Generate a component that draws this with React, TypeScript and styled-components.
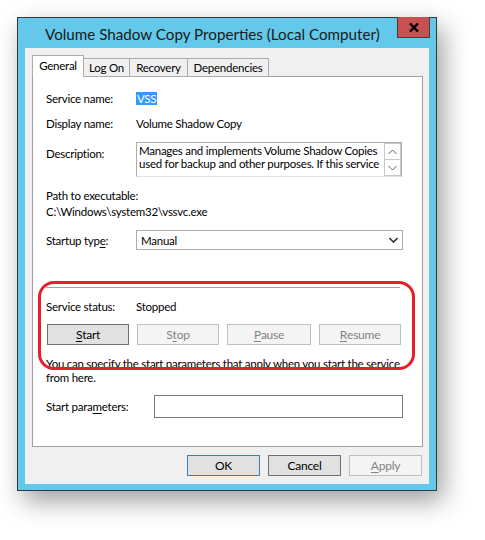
import React from 'react';
import styled, { createGlobalStyle } from 'styled-components';

const GlobalStyle = createGlobalStyle`
  html, body {
    margin: 0;
    padding: 0;
    background: #ffffff;
  }
  body {
    font-family: Lato, "Liberation Sans", Arial, sans-serif;
    font-size: 11.5px;
    letter-spacing: -0.25px;
    color: #000;
  }
`;

const Page = styled.div`
  width: 485px;
  height: 540px;
  padding: 17px 0 0 17px;
  box-sizing: border-box;
  overflow: hidden;
`;

const Window = styled.div`
  width: 420px;
  box-sizing: border-box;
  background: #63c8e9;
  border: 1px solid #2d3a40;
  box-shadow: 6px 10px 24px rgba(0, 0, 0, 0.38);
  display: flex;
  flex-direction: column;
  padding: 0 7px 6px 7px;
`;

const TitleBar = styled.div`
  height: 30px;
  display: flex;
  align-items: center;
  padding-left: 20px;
  position: relative;
`;

const Title = styled.div`
  font-size: 15.2px;
  letter-spacing: 0;
  color: #1a1a1a;
  margin-top: 2px;
  white-space: nowrap;
`;

const CloseButton = styled.div`
  position: absolute;
  right: -1px;
  top: -1px;
  width: 33px;
  height: 21px;
  background: #c75050;
  border: 1px solid #4a3a3a;
  border-top: none;
  box-sizing: border-box;
  display: flex;
  align-items: center;
  justify-content: center;
  svg { display: block; }
`;

const Client = styled.div`
  background: #f0f0f0;
  padding: 7px 6px 8px 7px;
  display: flex;
  flex-direction: column;
`;

const TabStrip = styled.div`
  display: flex;
  align-items: flex-end;
  height: 22px;
  position: relative;
  z-index: 1;
`;

const Tab = styled.div<{ $active?: boolean; $w: number }>`
  width: ${p => p.$w}px;
  height: ${p => (p.$active ? 22 : 19)}px;
  box-sizing: border-box;
  background: ${p => (p.$active ? '#ffffff' : '#f0f0f0')};
  border: 1px solid #acacac;
  border-bottom: ${p => (p.$active ? 'none' : '1px solid #acacac')};
  margin-left: ${p => (p.$active ? 0 : -1)}px;
  display: flex;
  align-items: center;
  justify-content: center;
  white-space: nowrap;
  padding-bottom: ${p => (p.$active ? 3 : 0)}px;
  &:first-child { margin-left: 0; }
`;

const Pane = styled.div`
  background: #ffffff;
  border: 1px solid #a0a0a0;
  margin-top: -1px;
  height: 371px;
  box-sizing: border-box;
  padding: 14px 20px 0 13px;
  display: flex;
  flex-direction: column;
  position: relative;
`;

const Row = styled.div<{ $gap?: number; $top?: boolean }>`
  display: grid;
  grid-template-columns: 90px 1fr;
  align-items: ${p => (p.$top ? 'start' : 'center')};
  margin-top: ${p => p.$gap ?? 0}px;
  line-height: 15px;
`;

const Label = styled.div<{ $pad?: number }>`
  padding-top: ${p => p.$pad ?? 0}px;
  white-space: nowrap;
`;

const Selected = styled.span`
  background: #3399ff;
  color: #ffffff;
  padding: 0 1px;
`;

const TextArea = styled.div`
  height: 35px;
  border: 1px solid #abadb3;
  border-bottom-color: #e3e3e3;
  box-sizing: border-box;
  display: flex;
  overflow: hidden;
`;

const TextContent = styled.div`
  flex: 1;
  padding: 1px 0 0 2px;
  line-height: 13px;
  white-space: nowrap;
`;

const ScrollBar = styled.div`
  width: 17px;
  display: flex;
  flex-direction: column;
`;

const ScrollBtn = styled.div`
  height: 17px;
  border: 1px solid #c8c8c8;
  margin-top: -1px;
  box-sizing: border-box;
  background: #fff;
  display: flex;
  align-items: center;
  justify-content: center;
  &:first-child { margin-top: 0; }
`;

const Plain = styled.div<{ $gap?: number }>`
  margin-top: ${p => p.$gap ?? 0}px;
  line-height: 15px;
`;

const Combo = styled.div`
  height: 20px;
  border: 1px solid #acacac;
  box-sizing: border-box;
  background: #fff;
  display: flex;
  align-items: center;
  justify-content: space-between;
  padding: 0 4px 0 4px;
  margin-right: -1px;
`;

const Separator = styled.div`
  height: 1px;
  background: #a0a0a0;
  margin: 37px 2px 0 0;
`;

const ButtonRow = styled.div`
  display: grid;
  grid-template-columns: 82px 82px 84px 82px;
  column-gap: 8px;
  margin-top: 10px;
  padding-left: 1px;
`;

const Button = styled.div<{ $disabled?: boolean; $focus?: boolean }>`
  height: 21px;
  box-sizing: border-box;
  border: 1px solid ${p => (p.$disabled ? '#bfbfbf' : p.$focus ? '#3c7fb1' : '#707070')};
  background: ${p => (p.$disabled ? '#f4f4f4' : '#e1e1e1')};
  color: ${p => (p.$disabled ? '#838383' : '#000')};
  display: flex;
  align-items: center;
  justify-content: center;
  font-size: 12px;
`;

const Info = styled.div`
  margin-top: 12px;
  line-height: 14px;
  white-space: nowrap;
`;

const ParamInput = styled.div`
  height: 23px;
  border: 1px solid #7a7a7a;
  box-sizing: border-box;
  background: #fff;
  margin-right: -1px;
`;

const ParamRow = styled.div`
  display: grid;
  grid-template-columns: 108px 1fr;
  align-items: center;
  margin-top: 10px;
`;

const Footer = styled.div`
  display: flex;
  justify-content: flex-end;
  gap: 8px;
  padding: 8px 1px 0 0;
`;

const FooterButton = styled(Button)`
  width: 73px;
`;

const Highlight = styled.div`
  position: absolute;
  left: 5px;
  top: 204px;
  width: 377px;
  height: 89px;
  border: 3px solid #e61e2b;
  border-radius: 16px;
  box-sizing: border-box;
  pointer-events: none;
`;

const U = styled.span`
  text-decoration: underline;
  text-underline-offset: 2px;
`;

const Chevron = ({ up }: { up?: boolean }) => (
  <svg width="9" height="6" viewBox="0 0 9 6">
    <path
      d={up ? 'M0.5 5 L4.5 1 L8.5 5' : 'M0.5 1 L4.5 5 L8.5 1'}
      fill="none"
      stroke="#606060"
      strokeWidth="1"
    />
  </svg>
);

export default function App() {
  return (
    <>
      <GlobalStyle />
      <Page>
        <Window>
          <TitleBar>
            <Title>Volume Shadow Copy Properties (Local Computer)</Title>
            <CloseButton>
              <svg width="10" height="9" viewBox="0 0 10 9">
                <path d="M1 0.5 L9 8.5 M9 0.5 L1 8.5" stroke="#000" strokeWidth="2.4" />
              </svg>
            </CloseButton>
          </TitleBar>
          <Client>
            <TabStrip>
              <Tab $active $w={52}>General</Tab>
              <Tab $w={47}>Log On</Tab>
              <Tab $w={59}>Recovery</Tab>
              <Tab $w={82}>Dependencies</Tab>
            </TabStrip>
            <Pane>
              <Row>
                <Label>Service name:</Label>
                <div><Selected>VSS</Selected></div>
              </Row>
              <Row $gap={10}>
                <Label>Display name:</Label>
                <div>Volume Shadow Copy</div>
              </Row>
              <Row $gap={11} $top>
                <Label $pad={4}>Description:</Label>
                <TextArea>
                  <TextContent>
                    Manages and implements Volume Shadow Copies
                    <br />
                    used for backup and other purposes. If this service
                  </TextContent>
                  <ScrollBar>
                    <ScrollBtn><Chevron up /></ScrollBtn>
                    <ScrollBtn><Chevron /></ScrollBtn>
                  </ScrollBar>
                </TextArea>
              </Row>
              <Plain $gap={11}>Path to executable:</Plain>
              <Plain $gap={1}>C:\Windows\system32\vssvc.exe</Plain>
              <Row $gap={11}>
                <Label>Startup typ<U>e</U>:</Label>
                <Combo>
                  <span>Manual</span>
                  <svg width="9" height="6" viewBox="0 0 9 6">
                    <path d="M0.5 1 L4.5 5 L8.5 1" fill="none" stroke="#333" strokeWidth="1.6" />
                  </svg>
                </Combo>
              </Row>
              <Separator />
              <Row $gap={11}>
                <Label>Service status:</Label>
                <div>Stopped</div>
              </Row>
              <ButtonRow>
                <Button><U>S</U>tart</Button>
                <Button $disabled>S<U>t</U>op</Button>
                <Button $disabled><U>P</U>ause</Button>
                <Button $disabled><U>R</U>esume</Button>
              </ButtonRow>
              <Info>
                You can specify the start parameters that apply when you start the service
                <br />
                from here.
              </Info>
              <ParamRow>
                <div>Start para<U>m</U>eters:</div>
                <ParamInput />
              </ParamRow>
              <Highlight />
            </Pane>
            <Footer>
              <FooterButton $focus>OK</FooterButton>
              <FooterButton>Cancel</FooterButton>
              <FooterButton $disabled><U>A</U>pply</FooterButton>
            </Footer>
          </Client>
        </Window>
      </Page>
    </>
  );
}
